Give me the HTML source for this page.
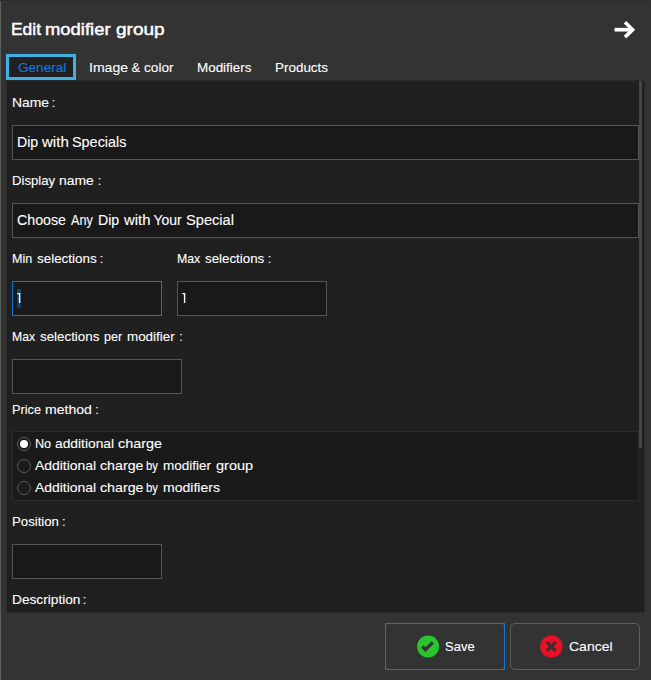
<!DOCTYPE html>
<html>
<head>
<meta charset="utf-8">
<title>Edit modifier group</title>
<style>
html,body{margin:0;padding:0;}
body{width:651px;height:680px;background:#333333;overflow:hidden;position:relative;
 font-family:"Liberation Sans",sans-serif;color:#ffffff;font-size:12.9px;}
.abs{position:absolute;}
.t{position:absolute;white-space:nowrap;transform-origin:0 0;line-height:16px;height:16px;color:#fff;-webkit-text-stroke:0.1px #fff;}
#topline{left:0;top:0;width:650px;height:1px;background:#2d2d2d;}
#leftline{left:0;top:1px;width:1px;height:679px;background:#5a6058;}
.ti{font-size:16.5px;line-height:22px;height:22px;-webkit-text-stroke:0.45px #fff;}
#panel{left:6px;top:80px;width:637px;height:531px;background:#202020;border:1px solid #2a2a2a;}
#tab{left:6px;top:54px;width:64px;height:20px;border:3px solid #41b0e4;background:#202020;}
.inp{position:absolute;height:33px;border:1px solid #555555;background:#191919;}
#rbox{left:12px;top:431px;width:625px;height:68px;border:1px solid #2b2b2b;background:#1a1a1a;}
.radio{position:absolute;left:17px;width:12px;height:12px;border:1px solid #5c5c5c;border-radius:50%;background:#1a1a1a;}
.v{font-size:14px;}
.btn{position:absolute;top:623px;height:45px;border:1px solid #5a6058;border-radius:5px;}
#thumb{left:639px;top:81px;width:3px;height:367px;background:#454545;}
</style>
</head>
<body>
<div class="abs" id="topline"></div>
<div class="abs" id="leftline"></div>

<svg class="abs" style="left:610px;top:16px" width="30" height="28" viewBox="0 0 30 28">
 <path d="M4.6 13.7 H22.4" stroke="#fff" stroke-width="3.7" fill="none" stroke-linecap="butt"/>
 <path d="M15.0 6.3 L22.6 13.7 L15.0 21.1" stroke="#fff" stroke-width="3.6" fill="none" stroke-linejoin="miter" stroke-linecap="butt"/>
</svg>

<div class="abs" id="panel"></div>
<div class="abs" id="thumb"></div>

<div class="abs" id="tab"></div>

<div class="inp" style="left:12px;top:125px;width:625px;"></div>

<div class="inp" style="left:12px;top:203px;width:625px;"></div>

<div class="inp" style="left:12px;top:281px;width:148px;border-color:#0a78d4;"></div>
<div class="abs" style="left:17px;top:289px;width:4px;height:19px;background:#14426f;"></div>
<svg class="abs" style="left:17px;top:292px" width="6" height="12" viewBox="0 0 6 12"><path d="M0.3 1.0 L3.3 1.0 L3.3 11 L1.9 11 L1.9 2.3 L0.3 2.3 Z" fill="#fff"/></svg>
<div class="inp" style="left:177px;top:281px;width:148px;"></div>
<svg class="abs" style="left:182px;top:292px" width="6" height="12" viewBox="0 0 6 12"><path d="M0.3 1.0 L3.3 1.0 L3.3 11 L1.9 11 L1.9 2.3 L0.3 2.3 Z" fill="#fff"/></svg>

<div class="inp" style="left:12px;top:359px;width:168px;"></div>

<div class="abs" id="rbox"></div>
<div class="radio" style="top:437px;"></div>
<div class="abs" style="left:20px;top:440px;width:8px;height:8px;border-radius:50%;background:#ffffff;"></div>
<div class="radio" style="top:459px;"></div>
<div class="radio" style="top:481px;"></div>

<div class="inp" style="left:12px;top:544px;width:148px;"></div>


<span class="t ti" style="left:11.25px;top:18px;transform:scaleX(1.0545);">Edit</span>
<span class="t ti" style="left:45.06px;top:18px;transform:scaleX(1.1172);">modifier</span>
<span class="t ti" style="left:116.22px;top:18px;transform:scaleX(1.1539);">group</span>
<span class="t" style="left:17.77px;top:60px;transform:scaleX(1.0539);color:#1079dc;-webkit-text-stroke-color:#1079dc;">General</span>
<span class="t" style="left:88.81px;top:60px;transform:scaleX(1.0899);">Image</span>
<span class="t" style="left:131.43px;top:60px;">&amp;</span>
<span class="t" style="left:143.87px;top:60px;transform:scaleX(1.0569);">color</span>
<span class="t" style="left:196.86px;top:60px;transform:scaleX(1.0412);">Modifiers</span>
<span class="t" style="left:274.86px;top:60px;transform:scaleX(1.0424);">Products</span>
<span class="t" style="left:11.62px;top:95px;transform:scaleX(1.0788);">Name</span>
<span class="t" style="left:51.70px;top:95px;">:</span>
<span class="t v" style="left:16.99px;top:134px;transform:scaleX(1.0103);">Dip</span>
<span class="t v" style="left:42.00px;top:134px;transform:scaleX(1.0750);">with</span>
<span class="t v" style="left:72.09px;top:134px;transform:scaleX(1.0288);">Specials</span>
<span class="t" style="left:11.98px;top:173px;transform:scaleX(1.0182);">Display</span>
<span class="t" style="left:59.49px;top:173px;transform:scaleX(1.0806);">name</span>
<span class="t" style="left:97.70px;top:173px;">:</span>
<span class="t v" style="left:17.49px;top:212px;transform:scaleX(1.0159);">Choose</span>
<span class="t v" style="left:71.40px;top:212px;transform:scaleX(0.9072);">Any</span>
<span class="t v" style="left:98.49px;top:212px;transform:scaleX(1.0103);">Dip</span>
<span class="t v" style="left:123.60px;top:212px;transform:scaleX(1.0625);">with</span>
<span class="t v" style="left:153.45px;top:212px;">Your</span>
<span class="t v" style="left:186.38px;top:212px;transform:scaleX(1.0449);">Special</span>
<span class="t" style="left:12.03px;top:251px;transform:scaleX(0.9737);">Min</span>
<span class="t" style="left:36.54px;top:251px;transform:scaleX(1.0396);">selections</span>
<span class="t" style="left:99.70px;top:251px;">:</span>
<span class="t" style="left:177.05px;top:251px;transform:scaleX(0.9548);">Max</span>
<span class="t" style="left:205.24px;top:251px;transform:scaleX(1.0326);">selections</span>
<span class="t" style="left:267.70px;top:251px;">:</span>
<span class="t" style="left:12.05px;top:329px;transform:scaleX(0.9505);">Max</span>
<span class="t" style="left:40.34px;top:329px;transform:scaleX(1.0344);">selections</span>
<span class="t" style="left:104.07px;top:329px;transform:scaleX(0.9690);">per</span>
<span class="t" style="left:126.52px;top:329px;transform:scaleX(1.0378);">modifier</span>
<span class="t" style="left:179.20px;top:329px;">:</span>
<span class="t" style="left:12.01px;top:402px;transform:scaleX(0.9893);">Price</span>
<span class="t" style="left:45.28px;top:402px;transform:scaleX(1.0892);">method</span>
<span class="t" style="left:95.20px;top:402px;">:</span>
<span class="t" style="left:35.02px;top:436px;transform:scaleX(0.9800);">No</span>
<span class="t" style="left:54.96px;top:436px;transform:scaleX(1.0704);">additional</span>
<span class="t" style="left:118.04px;top:436px;transform:scaleX(1.1169);">charge</span>
<span class="t" style="left:35.30px;top:458px;transform:scaleX(1.0798);">Additional</span>
<span class="t" style="left:99.55px;top:458px;transform:scaleX(1.1039);">charge</span>
<span class="t" style="left:146.44px;top:458px;transform:scaleX(0.8769);">by</span>
<span class="t" style="left:163.32px;top:458px;transform:scaleX(1.0444);">modifier</span>
<span class="t" style="left:215.84px;top:458px;transform:scaleX(1.1250);">group</span>
<span class="t" style="left:35.30px;top:480px;transform:scaleX(1.0798);">Additional</span>
<span class="t" style="left:99.55px;top:480px;transform:scaleX(1.1039);">charge</span>
<span class="t" style="left:146.44px;top:480px;transform:scaleX(0.8769);">by</span>
<span class="t" style="left:163.28px;top:480px;transform:scaleX(1.0888);">modifiers</span>
<span class="t" style="left:11.98px;top:514px;transform:scaleX(1.0237);">Position</span>
<span class="t" style="left:61.90px;top:514px;">:</span>
<span class="t" style="left:11.94px;top:592px;transform:scaleX(1.0614);">Description</span>
<span class="t" style="left:82.70px;top:592px;">:</span>
<span class="t" style="left:445.49px;top:639px;transform:scaleX(1.0105);">Save</span>
<span class="t" style="left:568.76px;top:639px;transform:scaleX(1.0865);">Cancel</span>
<!-- Save button -->
<div class="btn" style="left:385px;width:118px;border-color:#4a4f48;"></div>
<div class="abs" style="left:385px;top:623px;width:118px;height:45px;border:1px solid #0a78d4;"></div>
<svg class="abs" style="left:416px;top:634px" width="24" height="24" viewBox="0 0 24 24">
 <circle cx="12.1" cy="12.5" r="11.0" fill="#28c52c"/>
 <path d="M6.4 12.5 L9.5 15.6 L16.8 8.3" stroke="#333333" stroke-width="3.3" fill="none"/>
</svg>

<!-- Cancel button -->
<div class="btn" style="left:510px;width:128px;"></div>
<svg class="abs" style="left:539px;top:634px" width="24" height="24" viewBox="0 0 24 24">
 <circle cx="12.3" cy="12.5" r="11.1" fill="#e81123"/>
 <path d="M7.9 8.1 L16.7 16.9 M16.7 8.1 L7.9 16.9" stroke="#333333" stroke-width="3.2" fill="none"/>
</svg>
</body>
</html>
